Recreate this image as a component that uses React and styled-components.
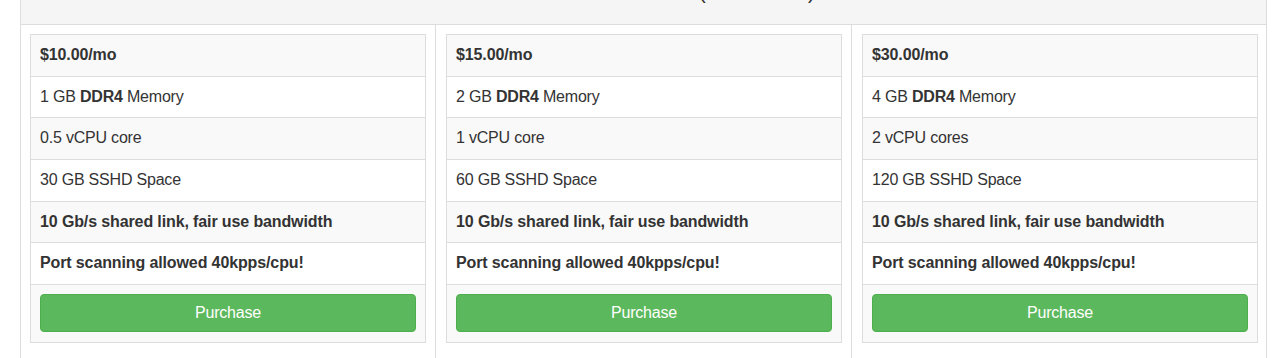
import React from "react";
import styled, { createGlobalStyle } from "styled-components";

const Global = createGlobalStyle`
  html, body { margin: 0; padding: 0; background: #fff; overflow: hidden; }
  body {
    font-family: "Liberation Sans", Arial, Helvetica, sans-serif;
    font-size: 16px;
    color: #333;
  }
`;

const Page = styled.div`
  padding: 0 13px 0 20px;
  height: 358px;
  overflow: hidden;
`;

const Panel = styled.div`
  margin-top: -20px;
  border: 1px solid #ddd;
  border-radius: 4px;
  background: #fff;
`;

const Heading = styled.div`
  height: 44px;
  box-sizing: border-box;
  padding-top: 0;
  background: #f5f5f5;
  border-bottom: 1px solid #ddd;
  text-align: center;
  font-size: 20px;
  line-height: 22px;
  color: #333;
`;

const Body = styled.div`
  display: grid;
  grid-template-columns: 414px 416px 1fr;
`;

const Column = styled.div`
  padding: 9px ${(p) => (p.$last ? "8px" : "9px")} 30px
    ${(p) => (p.$first ? "9px" : "10px")};
  border-left: ${(p) => (p.$first ? "none" : "1px solid #ddd")};
`;

const Table = styled.div`
  border: 1px solid #ddd;
  display: flex;
  flex-direction: column;
`;

const Row = styled.div`
  padding: 8px 9px;
  line-height: 24.67px;
  font-size: 16px;
  border-top: ${(p) => (p.$first ? "none" : "1px solid #ddd")};
  background: ${(p) => (p.$striped ? "#f9f9f9" : "#fff")};
  font-weight: ${(p) => (p.$bold ? "bold" : "normal")};
  letter-spacing: ${(p) => (p.$bold ? "-0.12px" : "-0.2px")};
  white-space: nowrap;
`;

const ButtonRow = styled.div`
  padding: 9px 9px 10px;
  border-top: 1px solid #ddd;
  background: #f9f9f9;
`;

const Button = styled.button`
  display: block;
  width: 100%;
  height: 38px;
  border: 1px solid #4cae4c;
  border-radius: 4px;
  background: #5cb85c;
  color: #fff;
  font-family: "Liberation Sans", Arial, Helvetica, sans-serif;
  font-size: 16px;
  letter-spacing: -0.2px;
  line-height: 20px;
  cursor: pointer;
`;

const plans = [
  { price: "$10.00/mo", mem: "1", cpu: "0.5 vCPU core", disk: "30 GB SSHD Space" },
  { price: "$15.00/mo", mem: "2", cpu: "1 vCPU core", disk: "60 GB SSHD Space" },
  { price: "$30.00/mo", mem: "4", cpu: "2 vCPU cores", disk: "120 GB SSHD Space" },
];

export default function App() {
  return (
    <>
      <Global />
      <Page>
        <Panel>
          <Heading>KVM Cloud VPS Servers (Amsterdam)</Heading>
          <Body>
            {plans.map((p, i) => (
              <Column key={p.price} $first={i === 0} $last={i === plans.length - 1}>
                <Table>
                  <Row $first $bold $striped>{p.price}</Row>
                  <Row>
                    {p.mem} GB <b>DDR4</b> Memory
                  </Row>
                  <Row $striped>{p.cpu}</Row>
                  <Row>{p.disk}</Row>
                  <Row $bold $striped>10 Gb/s shared link, fair use bandwidth</Row>
                  <Row $bold>Port scanning allowed 40kpps/cpu!</Row>
                  <ButtonRow>
                    <Button>Purchase</Button>
                  </ButtonRow>
                </Table>
              </Column>
            ))}
          </Body>
        </Panel>
      </Page>
    </>
  );
}
